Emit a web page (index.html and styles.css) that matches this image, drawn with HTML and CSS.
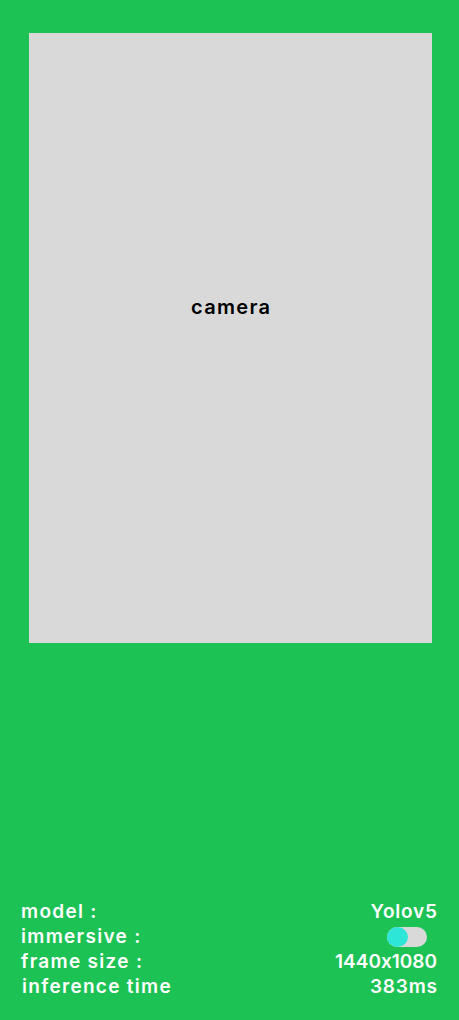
FILE: index.html
```html
<!DOCTYPE html>
<html lang="en">
<head>
<meta charset="utf-8">
<title>Camera</title>
<link rel="stylesheet" href="styles.css">
</head>
<body>
<main class="screen">
  <section class="camera">
    <span class="camera-label">camera</span>
  </section>
  <section class="info">
    <div class="row"><span class="label">model :</span><span class="value">Yolov5</span></div>
    <div class="row"><span class="label">immersive :</span><span class="toggle"><span class="thumb"></span></span></div>
    <div class="row"><span class="label">frame size :</span><span class="value digits">1440x1080</span></div>
    <div class="row"><span class="label indent">inference time</span><span class="value">383ms</span></div>
  </section>
</main>
</body>
</html>
```
FILE: styles.css
```css
html, body {
  margin: 0;
  padding: 0;
  background: #1cc254;
}
.screen {
  width: 459px;
  height: 1020px;
  display: flex;
  flex-direction: column;
  font-family: "Inter", "Noto Sans", sans-serif;
  font-weight: 600;
  font-feature-settings: "calt" 0;
}
.camera {
  margin: 33px 27px 0 29px;
  height: 610px;
  background: #d9d9d9;
  display: flex;
  align-items: center;
  justify-content: center;
  padding-bottom: 62px;
  box-sizing: border-box;
}
.camera-label {
  color: #000;
  font-size: 20px;
  letter-spacing: 1.3px;
  margin-right: -1.3px;
}
.info {
  margin-top: auto;
  padding: 0 22px 21px 21px;
  display: flex;
  flex-direction: column;
  color: #fff;
  font-size: 19px;
}
.row {
  height: 25px;
  display: flex;
  align-items: center;
  justify-content: space-between;
}
.label {
  letter-spacing: 1.3px;
}
.value {
  letter-spacing: 0.8px;
  margin-right: -0.8px;
}
.value.digits {
  letter-spacing: 0;
  margin-right: 0;
}
.indent {
  padding-left: 1px;
}
.toggle {
  width: 40px;
  height: 20px;
  border-radius: 10px;
  background: #d9d9d9;
  margin-right: 10px;
  display: flex;
}
.thumb {
  width: 21px;
  height: 20px;
  border-radius: 50%;
  background: #2ee6d8;
}
```
